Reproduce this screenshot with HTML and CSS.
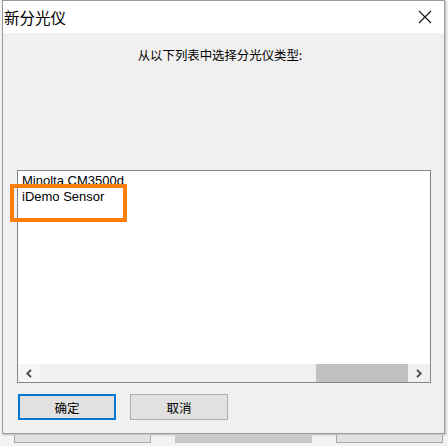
FILE: index.html
```html
<!DOCTYPE html>
<html>
<head>
<meta charset="utf-8">
<link rel="stylesheet" href="styles.css">
</head>
<body>
<div class="win">
  <div class="titlebar">
    <span class="title">新分光仪</span>
    <svg class="close" width="14" height="14" viewBox="0 0 14 14"><path d="M1 1L13 13M13 1L1 13" stroke="#111" stroke-width="1.1" fill="none"/></svg>
  </div>
  <div class="content">
    <div class="label">从以下列表中选择分光仪类型:</div>
    <div class="listbox">
      <div class="items">
        <div class="item">Minolta CM3500d</div>
        <div class="item">iDemo Sensor</div>
      </div>
      <div class="hscroll">
        <div class="sbtn left"><svg width="6" height="9" viewBox="0 0 6 9"><path d="M5 0.8L1.2 4.5L5 8.2" stroke="#444" stroke-width="1.8" fill="none"/></svg></div>
        <div class="track"></div>
        <div class="thumb"></div>
        <div class="sbtn right"><svg width="6" height="9" viewBox="0 0 6 9"><path d="M1 0.8L4.8 4.5L1 8.2" stroke="#444" stroke-width="1.8" fill="none"/></svg></div>
      </div>
    </div>
    <div class="buttons">
      <button class="btn default">确定</button>
      <button class="btn">取消</button>
    </div>
  </div>
</div>
<div class="behind">
  <div class="bar b1"></div>
  <div class="bar b2"></div>
  <div class="bar b3"></div>
</div>
<div class="highlight"></div>
</body>
</html>
```
FILE: styles.css
```css
html, body {
  margin: 0;
  padding: 0;
}
body {
  width: 448px;
  height: 446px;
  background: #f3f3f3;
  position: relative;
  overflow: hidden;
  font-family: "Noto Sans", "Noto Sans CJK SC", sans-serif;
}
.win {
  margin-left: 2px;
  width: 441px;
  height: 432px;
  border: 1px solid #9a9a9a;
  background: #f0f0f0;
  display: flex;
  flex-direction: column;
  box-shadow: 1px 1px 2px rgba(0,0,0,0.25);
}
.titlebar {
  height: 32px;
  background: #fff;
  display: flex;
  align-items: center;
  justify-content: space-between;
  padding: 0 12px 0 1px;
}
.title {
  font-family: "Noto Sans CJK SC", sans-serif;
  font-size: 15.5px;
  color: #000;
  line-height: 32px;
}
.close {
  display: block;
}
.content {
  flex: 1;
  display: flex;
  flex-direction: column;
  padding: 0 0 0 14px;
}
.label {
  font-family: "Noto Sans CJK SC", sans-serif;
  font-size: 12.4px;
  line-height: 16px;
  margin-top: 14px;
  text-align: center;
  width: 406px;
  color: #000;
}
.listbox {
  margin-top: 107px;
  width: 412px;
  height: 211px;
  border: 1px solid #828790;
  background: #fff;
  display: flex;
  flex-direction: column;
}
.items {
  flex: 1;
  padding: 2px 0 0 4px;
}
.item {
  font-family: "Liberation Sans", sans-serif;
  font-size: 13px;
  line-height: 16px;
  color: #000;
}
.hscroll {
  height: 18px;
  display: flex;
  background: #f0f0f0;
}
.sbtn {
  width: 22px;
  display: flex;
  align-items: center;
  justify-content: center;
}
.sbtn.left {
  background: #f5f5f5;
}
.sbtn svg { display: block; }
.track {
  flex: 1;
}
.thumb {
  width: 92px;
  background: #c1c1c1;
}
.buttons {
  display: flex;
  gap: 14px;
  margin-top: 11px;
  padding-left: 1px;
}
.btn {
  width: 98px;
  height: 26px;
  margin: 0;
  padding: 0;
  background: #e1e1e1;
  border: 1px solid #adadad;
  font-family: "Noto Sans CJK SC", sans-serif;
  font-size: 12.5px;
  color: #000;
}
.btn.default {
  border: 2px solid #0078d7;
}
.behind {
  display: flex;
  margin-top: 1px;
  height: 8px;
}
.bar {
  height: 7px;
  border: 1px solid #a8a8a8;
  border-top: none;
  background: #e1e1e1;
}
.b1 { margin-left: 14px; width: 135px; }
.b2 { margin-left: 24px; width: 135px; background: #c8c8c8; border-color: #c8c8c8; }
.b3 { margin-left: 24px; width: 105px; }
.highlight {
  position: absolute;
  left: 10px;
  top: 184px;
  width: 109px;
  height: 30px;
  border: 4.5px solid #fb7e06;
}
```
